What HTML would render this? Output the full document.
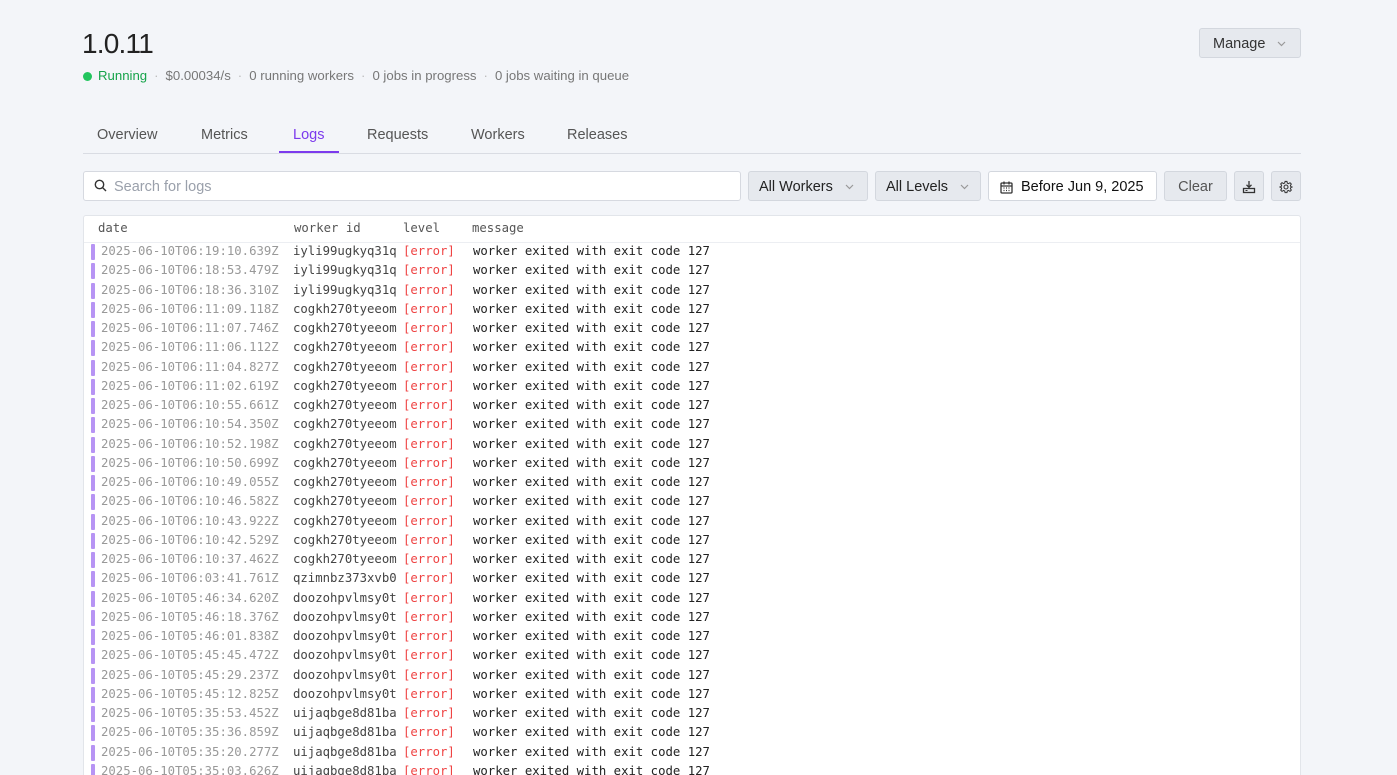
<!DOCTYPE html>
<html><head><meta charset="utf-8"><style>
*{box-sizing:border-box;margin:0;padding:0}
html,body{width:1397px;height:775px;overflow:hidden}
body{background:#f3f5f9;font-family:"Liberation Sans",sans-serif;color:#222;position:relative}
.abs{position:absolute}
h1{position:absolute;left:82px;top:28px;font-size:28px;font-weight:400;color:#222;letter-spacing:-0.8px}
.stat{position:absolute;left:83px;top:68px;font-size:13.2px;color:#777;white-space:nowrap}
.stat .dot{display:inline-block;width:9px;height:9px;border-radius:50%;background:#22c55e;margin-right:6px;vertical-align:-1px}
.stat .sep{color:#bbb;margin:0 7px}
.btn{position:absolute;background:#e6e9ee;border:1px solid #d3d7de;border-radius:3px;font-size:14.5px;color:#333;display:flex;align-items:center;padding-top:2px}
.chev{width:9px;height:6px;margin-left:12px}
.tabs{position:absolute;left:83px;top:153px;width:1218px;border-top:1px solid #d9dce3}
.tab{position:absolute;top:127px;font-size:14.5px;color:#555}
.panel{position:absolute;left:83px;top:215px;width:1218px;height:580px;background:#fff;border:1px solid #e2e5ea;border-radius:3px}
.mono{font-family:"DejaVu Sans Mono","Liberation Mono",monospace;font-size:12.3px;white-space:pre}
.row{position:absolute;left:0;height:19.25px;width:100%}
.row .bar{position:absolute;left:7px;top:2px;width:4px;height:16px;background:#b794f4;border-radius:1px}
.row span{position:absolute;top:2px}
</style></head><body>
<h1>1.0.11</h1>
<div class="stat"><span class="dot"></span><span style="color:#16a34a">Running</span><span class="sep">·</span>$0.00034/s<span class="sep">·</span>0 running workers<span class="sep">·</span>0 jobs in progress<span class="sep">·</span>0 jobs waiting in queue</div>
<div class="btn" style="left:1199px;top:28px;width:102px;height:30px;padding-left:13px">Manage<svg class="chev" viewBox="0 0 9 6"><path d="M1 1l3.5 3.5L8 1" fill="none" stroke="#999" stroke-width="1.2"/></svg></div>

<div class="tab" style="left:97px">Overview</div>
<div class="tab" style="left:201px">Metrics</div>
<div class="tab" style="left:293px;color:#7c3aed">Logs</div>
<div class="tab" style="left:367px">Requests</div>
<div class="tab" style="left:471px">Workers</div>
<div class="tab" style="left:567px">Releases</div>
<div class="tabs"></div>
<div class="abs" style="left:279px;top:151px;width:60px;height:2px;background:#7c3aed"></div>

<div class="abs" style="left:83px;top:171px;width:658px;height:30px;background:#fff;border:1px solid #d6d9e0;border-radius:3px"></div>
<svg class="abs" style="left:94px;top:179px" width="13" height="13" viewBox="0 0 13 13"><circle cx="5.5" cy="5.5" r="4.2" fill="none" stroke="#333" stroke-width="1.4"/><path d="M8.6 8.6L12 12" stroke="#333" stroke-width="1.4"/></svg>
<div class="abs" style="left:114px;top:179px;font-size:14.5px;color:#9aa0ab">Search for logs</div>

<div class="btn" style="left:748px;top:171px;width:120px;height:30px;padding-left:10px;color:#222">All Workers<svg class="chev" viewBox="0 0 9 6"><path d="M1 1l3.5 3.5L8 1" fill="none" stroke="#999" stroke-width="1.2"/></svg></div>
<div class="btn" style="left:875px;top:171px;width:106px;height:30px;padding-left:10px;color:#222">All Levels<svg class="chev" viewBox="0 0 9 6"><path d="M1 1l3.5 3.5L8 1" fill="none" stroke="#999" stroke-width="1.2"/></svg></div>
<div class="btn" style="left:988px;top:171px;width:169px;height:30px;padding-left:11px;background:#fff;color:#111"><svg width="13" height="13" viewBox="0 0 13 13" style="margin-right:8px"><rect x="1" y="2" width="11" height="10" rx="1" fill="none" stroke="#333" stroke-width="1.3"/><path d="M1 5h11M4 0.5v3M9 0.5v3" stroke="#333" stroke-width="1.3"/><path d="M3.5 7h1M6 7h1M8.5 7h1M3.5 9.5h1M6 9.5h1M8.5 9.5h1" stroke="#333" stroke-width="1.2"/></svg>Before Jun 9, 2025</div>
<div class="btn" style="left:1164px;top:171px;width:63px;height:30px;justify-content:center;color:#555">Clear</div>
<div class="btn" style="left:1234px;top:171px;width:30px;height:30px;justify-content:center"><svg width="14" height="14" viewBox="0 0 14 14"><path d="M7 1v6M4.5 4.8L7 7.3l2.5-2.5" fill="none" stroke="#333" stroke-width="1.3"/><rect x="1.5" y="8.5" width="11" height="4" fill="none" stroke="#333" stroke-width="1.3"/><path d="M3.5 10.5h2" stroke="#333" stroke-width="1"/></svg></div>
<div class="btn" style="left:1271px;top:171px;width:30px;height:30px;justify-content:center"><svg width="14" height="14" viewBox="0 0 14 14"><path d="M6 1h2l.4 1.8 1.3.6 1.6-1 1.4 1.4-1 1.6.6 1.3L14 7v0l-1.7.4-.6 1.3 1 1.6-1.4 1.4-1.6-1-1.3.6L8 13H6l-.4-1.7-1.3-.6-1.6 1-1.4-1.4 1-1.6-.6-1.3L0 7l1.7-.4.6-1.3-1-1.6 1.4-1.4 1.6 1 1.3-.6z" fill="none" stroke="#333" stroke-width="1.1" transform="translate(.5 .5) scale(.93)"/><circle cx="7" cy="7" r="2" fill="none" stroke="#333" stroke-width="1.1"/></svg></div>

<div class="panel">
<div class="mono" style="position:absolute;top:5px;left:14px;color:#555">date</div>
<div class="mono" style="position:absolute;top:5px;left:210px;color:#555">worker id</div>
<div class="mono" style="position:absolute;top:5px;left:319px;color:#555">level</div>
<div class="mono" style="position:absolute;top:5px;left:388px;color:#555">message</div>
<div style="position:absolute;top:26px;left:0;width:100%;border-top:1px solid #eceef2"></div>
<div id="rows" class="mono"></div>
</div>
<script>
var d=[["06:19:10.639","iyli99ugkyq31q"],["06:18:53.479","iyli99ugkyq31q"],["06:18:36.310","iyli99ugkyq31q"],["06:11:09.118","cogkh270tyeeom"],["06:11:07.746","cogkh270tyeeom"],["06:11:06.112","cogkh270tyeeom"],["06:11:04.827","cogkh270tyeeom"],["06:11:02.619","cogkh270tyeeom"],["06:10:55.661","cogkh270tyeeom"],["06:10:54.350","cogkh270tyeeom"],["06:10:52.198","cogkh270tyeeom"],["06:10:50.699","cogkh270tyeeom"],["06:10:49.055","cogkh270tyeeom"],["06:10:46.582","cogkh270tyeeom"],["06:10:43.922","cogkh270tyeeom"],["06:10:42.529","cogkh270tyeeom"],["06:10:37.462","cogkh270tyeeom"],["06:03:41.761","qzimnbz373xvb0"],["05:46:34.620","doozohpvlmsy0t"],["05:46:18.376","doozohpvlmsy0t"],["05:46:01.838","doozohpvlmsy0t"],["05:45:45.472","doozohpvlmsy0t"],["05:45:29.237","doozohpvlmsy0t"],["05:45:12.825","doozohpvlmsy0t"],["05:35:53.452","uijaqbge8d81ba"],["05:35:36.859","uijaqbge8d81ba"],["05:35:20.277","uijaqbge8d81ba"],["05:35:03.626","uijaqbge8d81ba"]];
var h="";d.forEach(function(r,i){h+='<div class="row" style="top:'+(26+i*19.25)+'px"><div class="bar"></div><span style="left:17px;color:#999">2025-06-10T'+r[0]+'Z</span><span style="left:209px;color:#444">'+r[1]+'</span><span style="left:319px;color:#ef4444">[error]</span><span style="left:389px;color:#222">worker exited with exit code 127</span></div>';});
document.getElementById("rows").innerHTML=h;
</script>
</body></html>
